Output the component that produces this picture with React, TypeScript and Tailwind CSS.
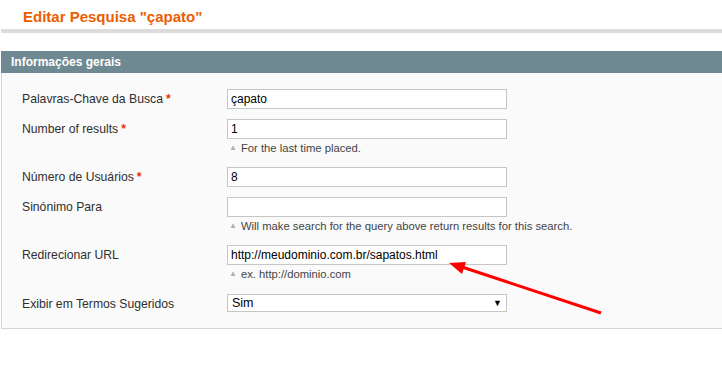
import React from "react";

const Req = () => <span className="text-[#eb340a] font-bold ml-[3px]">*</span>;

const Note = ({ children }: { children: React.ReactNode }) => (
  <div className="h-[18px] flex items-center whitespace-nowrap text-[11.25px] text-[#444] pl-[2px]">
    <span className="text-[#a9b4b8] text-[8px] mr-[4px]">▲</span>
    <span>{children}</span>
  </div>
);

const Row = ({
  label,
  required,
  children,
  note,
}: {
  label: string;
  required?: boolean;
  children: React.ReactNode;
  note?: string;
}) => (
  <div className="flex mb-[10px]">
    <div className="w-[225px] shrink-0 pl-[20px] pt-[1px] text-[12.2px] leading-[18px] text-[#2f2f2f]">
      {label}
      {required && <Req />}
    </div>
    <div className="w-[280px] shrink-0">
      {children}
      {note && <Note>{note}</Note>}
    </div>
  </div>
);

const Input = ({ value }: { value: string }) => (
  <div className="h-[20px] border border-[#c6c6c6] bg-white pl-[3px] pr-[2px] text-[12px] leading-[18px] text-black whitespace-nowrap">
    {value}
  </div>
);

export default function App() {
  return (
    <div
      className="relative w-[722px] h-[381px] bg-white overflow-hidden"
      style={{ fontFamily: '"Liberation Sans", Arial, sans-serif' }}
    >
      <div className="pl-[23px] pt-[8px] h-[29px] text-[15px] font-bold text-[#eb5e00] leading-[18px]">
        Editar Pesquisa "çapato"
      </div>
      <div className="ml-[1px] h-[4px] bg-[#dcdcdc]" />
      <div className="ml-[1px] mt-[18px]">
        <div className="h-[22px] bg-[#6f8992] pl-[10px] text-white font-bold text-[12px] leading-[22px]">
          Informações gerais
        </div>
        <div className="bg-[#fafafa] border-l border-b border-[#d6d6d6] pt-[16px] pb-[5px]">
          <Row label="Palavras-Chave da Busca" required>
            <Input value="çapato" />
          </Row>
          <Row label="Number of results" required note="For the last time placed.">
            <Input value="1" />
          </Row>
          <Row label="Número de Usuários" required>
            <Input value="8" />
          </Row>
          <Row
            label="Sinónimo Para"
            note="Will make search for the query above return results for this search."
          >
            <Input value="" />
          </Row>
          <Row label="Redirecionar URL" note="ex. http://dominio.com">
            <Input value="http://meudominio.com.br/sapatos.html" />
          </Row>
          <div className="h-[1px]" />
          <Row label="Exibir em Termos Sugeridos">
            <div className="h-[18px] border border-[#c6c6c6] bg-white pl-[4px] pr-[4px] text-[12.5px] leading-[16px] text-black flex items-center justify-between">
              <span>Sim</span>
              <span className="text-[9px] text-black">▼</span>
            </div>
          </Row>
        </div>
      </div>
      <svg
        className="absolute left-0 top-0 pointer-events-none"
        width="722"
        height="381"
        viewBox="0 0 722 381"
      >
        <line x1="601" y1="313" x2="462" y2="267" stroke="#ff0000" strokeWidth="3" />
        <polygon points="449,263 466,262 462,274" fill="#ff0000" />
      </svg>
    </div>
  );
}
